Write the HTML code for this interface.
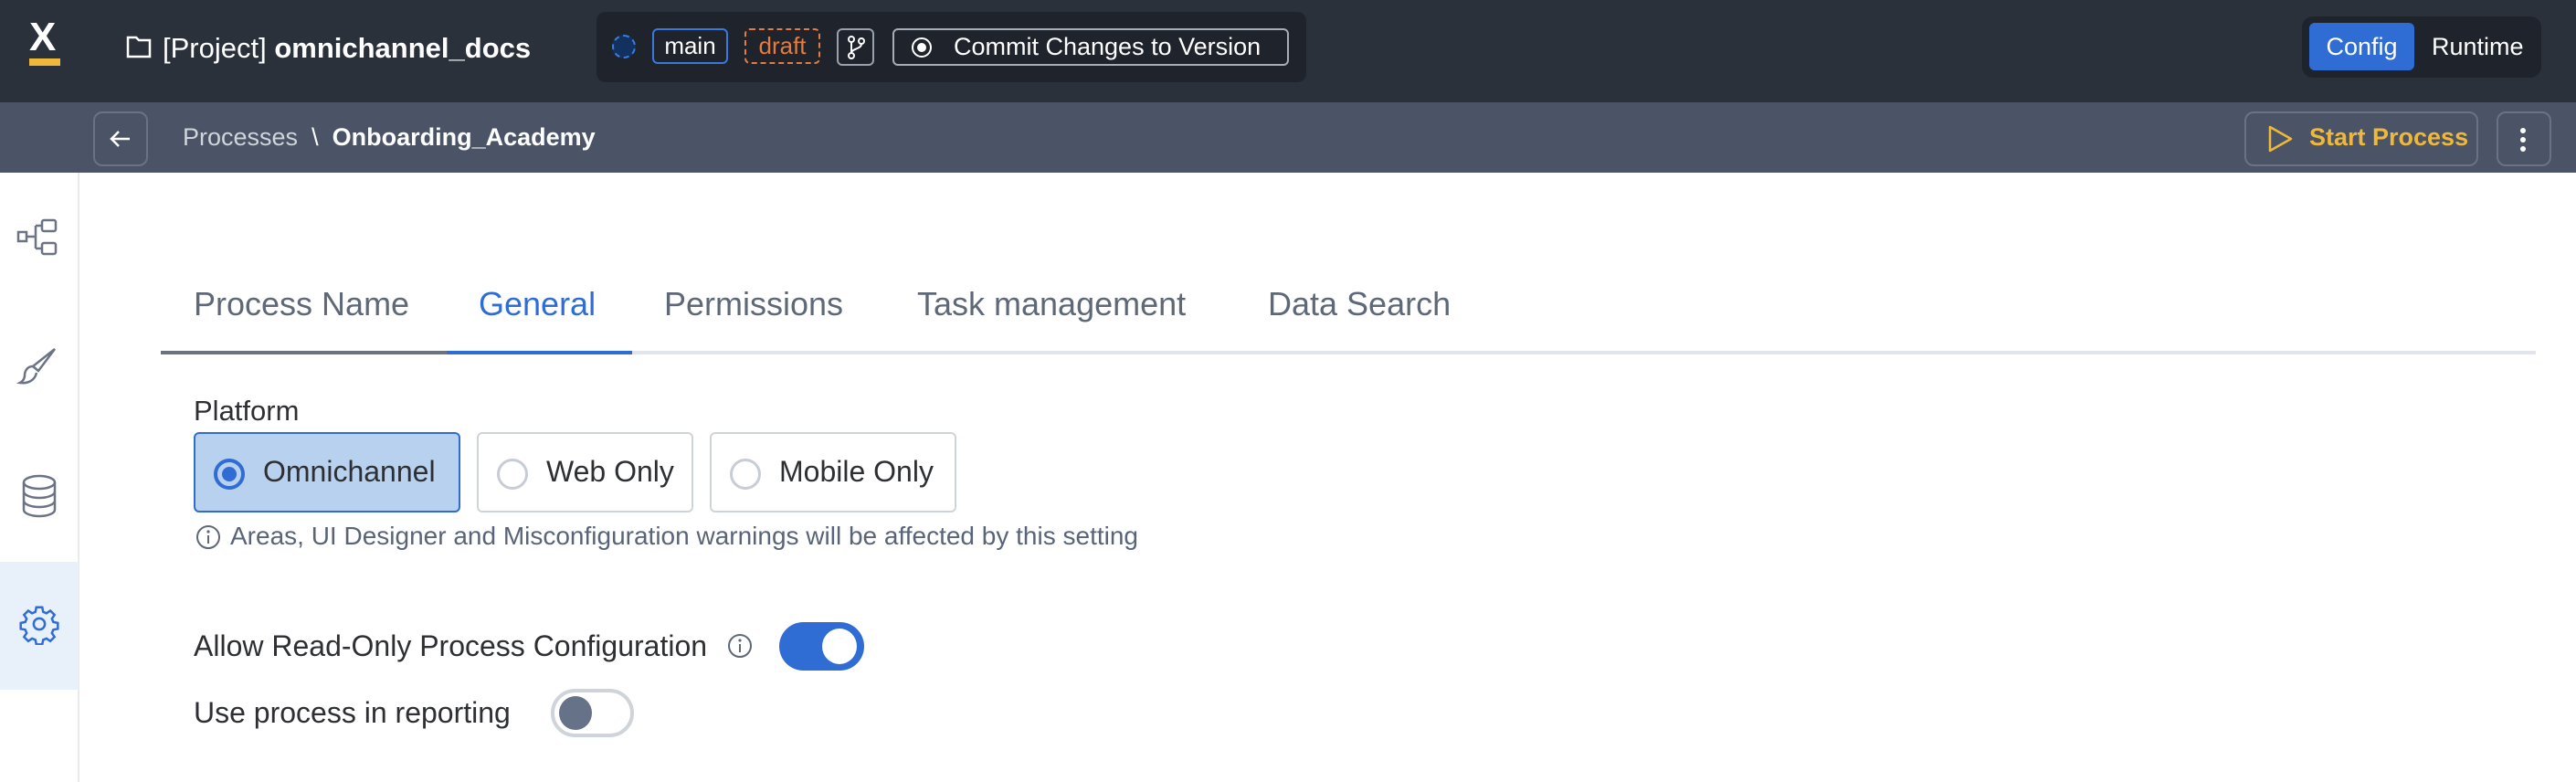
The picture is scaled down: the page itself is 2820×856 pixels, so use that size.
<!DOCTYPE html><html><head><meta charset="utf-8"><style>
*{box-sizing:border-box;margin:0;padding:0}
body{width:2820px;height:856px;overflow:hidden;background:#fff;font-family:"Liberation Sans",sans-serif;position:relative}
.a{position:absolute}
.top{left:0;top:0;width:2820px;height:112px;background:#2b313b}
.sub{left:0;top:112px;width:2820px;height:77px;background:#4a5466}
.t{color:#fff;white-space:nowrap}
.side{left:0;top:189px;width:87px;height:667px;border-right:2px solid #e8eaee}
.tab{top:312px;font-size:36px;color:#5f6877}
.radio{top:473px;height:88px;border:2px solid #cfd3da;border-radius:6px;background:#fff}
.rc{position:absolute;left:20px;top:27px;width:34px;height:34px;border-radius:50%;border:3px solid #c8ccd4}
.rl{position:absolute;top:23px;font-size:32px;color:#2d2f33;white-space:nowrap}
</style></head><body>
<div class="a top"></div>
<div class="a t" style="left:32px;top:16px;font-size:44px;font-weight:bold">X</div>
<div class="a" style="left:32px;top:64px;width:34px;height:8px;background:#f0b83a"></div>
<svg class="a" style="left:138px;top:38px" width="28" height="26" viewBox="0 0 28 26"><path d="M2 3h9l3 3h12v18H2z" fill="none" stroke="#fff" stroke-width="2.5"/></svg>
<div class="a t" style="left:178px;top:35px;font-size:31px">[Project] <b>omnichannel_docs</b></div>
<div class="a" style="left:653px;top:13px;width:777px;height:77px;background:#1f232b;border-radius:10px"></div>
<div class="a" style="left:670px;top:38px;width:26px;height:26px;border-radius:50%;border:2px dashed #3c7de0;background:#12315e"></div>
<div class="a t" style="left:714px;top:31px;width:83px;height:39px;border:2px solid #3a78dc;border-radius:6px;font-size:26px;text-align:center;line-height:35px">main</div>
<div class="a" style="left:815px;top:31px;width:83px;height:39px;border:2px dashed #e57c3c;border-radius:6px;font-size:26px;text-align:center;line-height:35px;color:#e57c3c">draft</div>
<div class="a" style="left:916px;top:31px;width:41px;height:41px;border:2px solid #9aa1ad;border-radius:6px"></div>
<svg class="a" style="left:922px;top:37px" width="30" height="30" viewBox="0 0 30 30"><g fill="none" stroke="#fff" stroke-width="2"><circle cx="10" cy="6" r="3"/><circle cx="10" cy="24" r="3"/><circle cx="21" cy="8" r="3"/><path d="M10 9v12M21 11c0 6-11 5-11 10"/></g></svg>
<div class="a t" style="left:977px;top:31px;width:434px;height:41px;border:2px solid #a7adb7;border-radius:6px;font-size:27px;line-height:37px;padding-left:65px">Commit Changes to Version</div>
<div class="a" style="left:998px;top:41px;width:22px;height:22px;border-radius:50%;border:2px solid #fff"></div>
<div class="a" style="left:1004px;top:47px;width:10px;height:10px;border-radius:50%;background:#fff"></div>
<div class="a" style="left:2520px;top:18px;width:262px;height:67px;background:#1f232b;border-radius:12px"></div>
<div class="a t" style="left:2528px;top:25px;width:115px;height:52px;background:#2f6cd4;border-radius:6px;font-size:27px;text-align:center;line-height:52px">Config</div>
<div class="a t" style="left:2662px;top:25px;font-size:27px;line-height:52px">Runtime</div>
<div class="a sub"></div>
<div class="a" style="left:102px;top:122px;width:60px;height:60px;border:2px solid #6a7384;border-radius:10px"></div>
<svg class="a" style="left:118px;top:138px" width="28" height="28" viewBox="0 0 28 28"><path d="M24 14H4M12 6l-8 8 8 8" fill="none" stroke="#fff" stroke-width="2.5"/></svg>
<div class="a" style="left:200px;top:135px;font-size:27px;color:#d0d4db;white-space:nowrap">Processes &nbsp;<span style="color:#fff">\</span>&nbsp; <b style="color:#fff">Onboarding_Academy</b></div>
<div class="a" style="left:2457px;top:122px;width:256px;height:60px;border:2px solid #6a7384;border-radius:10px"></div>
<svg class="a" style="left:2482px;top:136px" width="30" height="32" viewBox="0 0 30 32"><path d="M3 3l23 13L3 29z" fill="none" stroke="#f0b83a" stroke-width="2.5" stroke-linejoin="round"/></svg>
<div class="a" style="left:2528px;top:135px;font-size:27px;color:#f0b83a;font-weight:bold;white-space:nowrap">Start Process</div>
<div class="a" style="left:2733px;top:122px;width:60px;height:60px;border:2px solid #6a7384;border-radius:10px"></div>
<div class="a" style="left:2759px;top:140px;width:6px;height:6px;border-radius:50%;background:#fff;box-shadow:0 10px 0 #fff,0 20px 0 #fff"></div>
<div class="a side"></div>
<div class="a" style="left:0;top:615px;width:86px;height:140px;background:#e8f0fa"></div>
<svg class="a" style="left:18px;top:238px" width="48" height="44" viewBox="0 0 48 44"><g fill="none" stroke="#6b7385" stroke-width="2.5"><rect x="2" y="16" width="9" height="10"/><rect x="28" y="3" width="15" height="12" rx="2"/><rect x="28" y="28" width="15" height="12" rx="2"/><path d="M11 21h10M21 9v25M21 9h7M21 34h7"/></g></svg>
<svg class="a" style="left:18px;top:378px" width="48" height="48" viewBox="0 0 48 48"><g fill="none" stroke="#6b7385" stroke-width="2.5"><path d="M42 4L24 28l-6-5z"/><path d="M18 23c-6 0-9 5-9 10 0 4-3 7-5 8 8 1 16-2 18-11"/></g></svg>
<svg class="a" style="left:20px;top:518px" width="46" height="50" viewBox="0 0 46 50"><g fill="none" stroke="#6b7385" stroke-width="2.5"><ellipse cx="23" cy="10" rx="17" ry="7"/><path d="M6 10v30c0 4 8 7 17 7s17-3 17-7V10M6 20c0 4 8 7 17 7s17-3 17-7M6 30c0 4 8 7 17 7s17-3 17-7"/></g></svg>
<svg class="a" style="left:20px;top:660px" width="46" height="46" viewBox="0 0 24 24"><g fill="none" stroke="#2f6cd4" stroke-width="1.3"><circle cx="12" cy="12" r="3.2"/><path d="M10.3 2.5h3.4l.5 2.6 1.9.8 2.2-1.5 2.4 2.4-1.5 2.2.8 1.9 2.6.5v3.4l-2.6.5-.8 1.9 1.5 2.2-2.4 2.4-2.2-1.5-1.9.8-.5 2.6h-3.4l-.5-2.6-1.9-.8-2.2 1.5-2.4-2.4 1.5-2.2-.8-1.9-2.6-.5v-3.4l2.6-.5.8-1.9-1.5-2.2 2.4-2.4 2.2 1.5 1.9-.8z"/></g></svg>
<div class="a tab" style="left:212px">Process Name</div>
<div class="a tab" style="left:524px;color:#2f6cd4">General</div>
<div class="a tab" style="left:727px">Permissions</div>
<div class="a tab" style="left:1004px">Task management</div>
<div class="a tab" style="left:1388px">Data Search</div>
<div class="a" style="left:176px;top:384px;width:2600px;height:4px;background:#e1e4e8"></div>
<div class="a" style="left:176px;top:384px;width:313px;height:4px;background:#6b737d"></div>
<div class="a" style="left:489px;top:384px;width:203px;height:4px;background:#2f6cd4"></div>
<div class="a" style="left:212px;top:432px;font-size:31px;color:#2d2f33">Platform</div>
<div class="a radio" style="left:212px;width:292px;background:#b8d1ef;border-color:#2f6cd4"><div class="rc" style="border-color:#2f6cd4;border-width:4px"><div style="position:absolute;left:5px;top:5px;width:16px;height:16px;border-radius:50%;background:#2f6cd4"></div></div><div class="rl" style="left:74px">Omnichannel</div></div>
<div class="a radio" style="left:522px;width:237px"><div class="rc"></div><div class="rl" style="left:74px">Web Only</div></div>
<div class="a radio" style="left:777px;width:270px"><div class="rc"></div><div class="rl" style="left:74px">Mobile Only</div></div>
<svg class="a" style="left:214px;top:574px" width="28" height="28" viewBox="0 0 28 28"><g fill="none" stroke="#5f6877" stroke-width="2"><circle cx="14" cy="14" r="12"/><path d="M14 12v9"/></g><circle cx="14" cy="8" r="1.6" fill="#5f6877"/></svg>
<div class="a" style="left:252px;top:571px;font-size:28px;color:#5a6478;white-space:nowrap">Areas, UI Designer and Misconfiguration warnings will be affected by this setting</div>
<div class="a" style="left:212px;top:689px;font-size:32px;color:#2d2f33;white-space:nowrap">Allow Read-Only Process Configuration</div>
<svg class="a" style="left:796px;top:693px" width="28" height="28" viewBox="0 0 28 28"><g fill="none" stroke="#5f6877" stroke-width="2"><circle cx="14" cy="14" r="12"/><path d="M14 12v9"/></g><circle cx="14" cy="8" r="1.6" fill="#5f6877"/></svg>
<div class="a" style="left:853px;top:681px;width:93px;height:53px;border-radius:27px;background:#2f6cd4"></div>
<div class="a" style="left:900px;top:688px;width:38px;height:39px;border-radius:50%;background:#fff"></div>
<div class="a" style="left:212px;top:762px;font-size:32px;color:#2d2f33;white-space:nowrap">Use process in reporting</div>
<div class="a" style="left:603px;top:754px;width:91px;height:53px;border-radius:27px;background:#fff;border:4px solid #cfd3da"></div>
<div class="a" style="left:612px;top:762px;width:36px;height:37px;border-radius:50%;background:#667288"></div>
</body></html>
